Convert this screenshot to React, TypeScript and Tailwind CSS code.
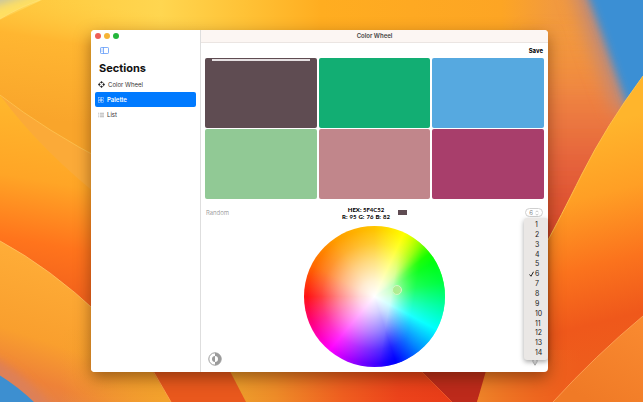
import { useState } from "react";
import { clsx } from "clsx";

const SWATCHES = [
  "#5f4c52", "#12ae73", "#56a9e0", "#91c995", "#c1868b", "#a83e6b", "#e0a458",
  "#3d5a80", "#98c1d9", "#ee6c4d", "#6a994e", "#bc4749", "#f2e8cf", "#386641",
];

const COUNTS = Array.from({ length: 14 }, (_, i) => i + 1);

function toRgb(hex: string) {
  const n = parseInt(hex.slice(1), 16);
  return { r: (n >> 16) & 255, g: (n >> 8) & 255, b: n & 255 };
}

function Wallpaper() {
  return (
    <svg
      viewBox="0 0 643 402"
      preserveAspectRatio="xMidYMid slice"
      className="absolute inset-0 w-full h-full"
      aria-hidden="true"
    >
      <defs>
        <linearGradient id="sky" x1="0" y1="0" x2="643" y2="0" gradientUnits="userSpaceOnUse">
          <stop offset="0" stopColor="#ffc63c" />
          <stop offset="0.12" stopColor="#ffce44" />
          <stop offset="0.25" stopColor="#ffd650" />
          <stop offset="0.38" stopColor="#ffc236" />
          <stop offset="0.5" stopColor="#ffad20" />
          <stop offset="0.78" stopColor="#fda524" />
          <stop offset="0.86" stopColor="#f29a3e" />
          <stop offset="1" stopColor="#ee8c44" />
        </linearGradient>
        <linearGradient id="leftTop" x1="70" y1="0" x2="50" y2="120" gradientUnits="userSpaceOnUse">
          <stop offset="0" stopColor="#ffca40" stopOpacity="0" />
          <stop offset="0.35" stopColor="#ffb631" />
          <stop offset="1" stopColor="#f9a52b" />
        </linearGradient>
        <linearGradient id="leftMid" x1="50" y1="110" x2="20" y2="285" gradientUnits="userSpaceOnUse">
          <stop offset="0" stopColor="#ffb62c" />
          <stop offset="0.4" stopColor="#ffa526" />
          <stop offset="0.75" stopColor="#ff741c" />
          <stop offset="1" stopColor="#f4641c" />
        </linearGradient>
        <linearGradient id="leftLow" x1="50" y1="250" x2="0" y2="402" gradientUnits="userSpaceOnUse">
          <stop offset="0" stopColor="#ffae38" />
          <stop offset="0.55" stopColor="#f99f2e" />
          <stop offset="0.8" stopColor="#ee8238" />
          <stop offset="1" stopColor="#e08050" />
        </linearGradient>
        <linearGradient id="lowGold" x1="60" y1="0" x2="165" y2="0" gradientUnits="userSpaceOnUse">
          <stop offset="0" stopColor="#f0a02c" stopOpacity="0" />
          <stop offset="1" stopColor="#f3a22c" />
        </linearGradient>
        <linearGradient id="lowMid" x1="230" y1="0" x2="455" y2="0" gradientUnits="userSpaceOnUse">
          <stop offset="0" stopColor="#eda02c" />
          <stop offset="0.2" stopColor="#ee8c28" />
          <stop offset="0.5" stopColor="#ef5e20" />
          <stop offset="0.75" stopColor="#ec431b" />
          <stop offset="1" stopColor="#e83c18" />
        </linearGradient>
        <linearGradient id="redGlow" x1="0" y1="20" x2="0" y2="250" gradientUnits="userSpaceOnUse">
          <stop offset="0" stopColor="#f5983a" stopOpacity="0" />
          <stop offset="0.35" stopColor="#ee8142" />
          <stop offset="0.65" stopColor="#e4603a" />
          <stop offset="1" stopColor="#d94428" />
        </linearGradient>
        <linearGradient id="petal" x1="575" y1="130" x2="630" y2="350" gradientUnits="userSpaceOnUse">
          <stop offset="0" stopColor="#ffb52c" />
          <stop offset="0.3" stopColor="#ff9f25" />
          <stop offset="0.6" stopColor="#fb731d" />
          <stop offset="0.85" stopColor="#ef581b" />
          <stop offset="1" stopColor="#ee5c1c" />
        </linearGradient>
        <linearGradient id="petalLow" x1="480" y1="0" x2="580" y2="0" gradientUnits="userSpaceOnUse">
          <stop offset="0" stopColor="#ee8228" />
          <stop offset="1" stopColor="#ee6a20" stopOpacity="0" />
        </linearGradient>
        <linearGradient id="corner" x1="640" y1="320" x2="590" y2="402" gradientUnits="userSpaceOnUse">
          <stop offset="0" stopColor="#f98a30" />
          <stop offset="1" stopColor="#f07a26" />
        </linearGradient>
        <filter id="soft" x="-50%" y="-50%" width="200%" height="200%">
          <feGaussianBlur stdDeviation="9" />
        </filter>
        <filter id="softer" x="-50%" y="-50%" width="200%" height="200%">
          <feGaussianBlur stdDeviation="4" />
        </filter>
      </defs>

      <rect width="643" height="402" fill="url(#sky)" />
      <path d="M0 0H42L0 20Z" fill="#ffdf62" />
      <path d="M-8 -8H38L-8 7Z" fill="#c4c4a4" filter="url(#softer)" />
      <path d="M0 19Q22 6 40 0H150L250 40V402H0Z" fill="url(#leftTop)" />
      <path d="M0 19Q22 6 40 0" fill="none" stroke="#ffe27e" strokeWidth="0.6" />

      {/* left petals */}
      <path d="M0 95Q45 130 110 164V330H0Z" fill="#fbaa38" />
      <path d="M0 95Q40 150 110 205V330H0Z" fill="url(#leftMid)" />
      <path d="M0 95Q45 130 110 164" fill="none" stroke="#ffcf60" strokeWidth="0.6" />
      <path d="M0 241Q50 268 100 315L180 402H0Z" fill="url(#leftLow)" />
      <path d="M60 330H140L170 402H60Z" fill="url(#lowGold)" />
      <path d="M0 241Q50 268 100 315" fill="none" stroke="#ffc364" strokeWidth="0.8" />
      <path d="M-20 352Q20 366 56 412H-20Z" fill="#dd8058" filter="url(#softer)" />
      <path d="M-4 373Q18 386 36 404H-4Z" fill="#3d8fd0" />

      {/* strip under the window */}
      <path d="M140 350L171 402H260L225 350Z" fill="#e9581d" />
      <path d="M219 350L246 402H460L424 350Z" fill="url(#lowMid)" />
      <path d="M400 350L452 402H500V350Z" fill="#bd2a1b" />
      <path d="M400 350L452 402" fill="none" stroke="#f4602c" strokeWidth="0.8" />
      <path d="M141 350L171 402" fill="none" stroke="#ffb350" strokeWidth="0.8" />

      {/* right side */}
      <path d="M520 20H590L643 110V260H530V250Z" fill="url(#redGlow)" filter="url(#softer)" />
      <path d="M570 -20L588 36L616 112H670V-20Z" fill="#c08a78" filter="url(#soft)" />
      <path d="M582 -20L602 34L628 108H670V-20Z" fill="#3a8fd4" filter="url(#softer)" />
      <path d="M643 76Q606 126 582 174T548 240Q508 310 477 402H643Z" fill="url(#petal)" />
      <path d="M492 350L477 402H580V350Z" fill="url(#petalLow)" />
      <path d="M643 76Q606 126 582 174T548 240" fill="none" stroke="#ffc04a" strokeWidth="1" />
      <path d="M553 402Q595 356 643 316V402Z" fill="url(#corner)" />
      <path d="M553 402Q595 356 643 316" fill="none" stroke="#ffa75c" strokeWidth="0.8" />
    </svg>
  );
}

function SidebarIcon() {
  return (
    <svg viewBox="0 0 18 14" className="w-[9px] h-[7px]" fill="none" stroke="#4b8df8" strokeWidth="1.4">
      <rect x="1" y="1" width="16" height="12" rx="1.6" />
      <path d="M7 1V13" />
      <path d="M3 4H5M3 6.5H5M3 9H5" strokeWidth="1" />
    </svg>
  );
}

function DiamondsIcon() {
  return (
    <svg viewBox="0 0 14 14" className="w-[7px] h-[7px]" fill="#222">
      <path d="M7 0L9.8 2.8L7 5.2L4.2 2.8Z" />
      <path d="M7 8.8L9.8 11.2L7 14L4.2 11.2Z" />
      <path d="M2.8 4.2L5.2 7L2.8 9.8L0 7Z" />
      <path d="M11.2 4.2L14 7L11.2 9.8L8.8 7Z" />
      <path d="M2.8 4.2L4.2 2.8M9.8 2.8L11.2 4.2M11.2 9.8L9.8 11.2M4.2 11.2L2.8 9.8" stroke="#222" strokeWidth="1.2" />
    </svg>
  );
}

function GridIcon() {
  return (
    <svg viewBox="0 0 12 12" className="w-[6px] h-[6px]" fill="none" stroke="#b9d8ff" strokeWidth="1">
      <rect x="0.8" y="0.8" width="4.4" height="4.4" />
      <rect x="6.8" y="0.8" width="4.4" height="4.4" />
      <rect x="0.8" y="6.8" width="4.4" height="4.4" />
      <rect x="6.8" y="6.8" width="4.4" height="4.4" />
      <circle cx="6" cy="6" r="1.5" fill="#b9d8ff" />
    </svg>
  );
}

function ListIcon() {
  return (
    <svg viewBox="0 0 12 12" className="w-[6px] h-[6px]" fill="none" stroke="#777" strokeWidth="1.1">
      <path d="M0.5 2.5H2M0.5 6H2M0.5 9.5H2M3.5 2.5H12M3.5 6H12M3.5 9.5H12" />
    </svg>
  );
}

function ContrastIcon() {
  return (
    <svg viewBox="0 0 28 28" className="w-[14px] h-[14px]">
      <circle cx="14" cy="14" r="12.4" fill="#fff" stroke="#9b9b9b" strokeWidth="2" />
      <path d="M14 1.6A12.4 12.4 0 0 1 14 26.4V20A6 6 0 0 0 14 8Z" fill="#9b9b9b" />
      <path d="M14 8A6 6 0 0 0 14 20Z" fill="#9b9b9b" />
    </svg>
  );
}

const SECTIONS = [
  { label: "Color Wheel", Icon: DiamondsIcon },
  { label: "Palette", Icon: GridIcon },
  { label: "List", Icon: ListIcon },
];

function Sidebar() {
  const [active, setActive] = useState("Palette");

  return (
    <aside className="w-[110px] shrink-0 bg-white border-r border-[#dedede] px-1">
      <div className="flex items-center gap-[3px] h-3">
        <button aria-label="Close" className="w-[6px] h-[6px] rounded-full bg-[#ee5f57]" />
        <button aria-label="Minimize" className="w-[6px] h-[6px] rounded-full bg-[#f6b436]" />
        <button aria-label="Zoom" className="w-[6px] h-[6px] rounded-full bg-[#23b63c]" />
      </div>
      <button aria-label="Toggle sidebar" className="block mt-[5px] ml-[5px]">
        <SidebarIcon />
      </button>
      <h1 className="mt-[6px] ml-1 text-[11px] leading-4 font-bold text-[#111]">Sections</h1>
      <nav className="mt-px">
        {SECTIONS.map(({ label, Icon }) => (
          <button
            key={label}
            onClick={() => setActive(label)}
            className={clsx(
              "flex items-center gap-[3px] w-full h-[15px] px-[3px] rounded-[2px] text-[6px] leading-[8px]",
              active === label ? "bg-[#007aff] text-white font-semibold" : "text-[#333]"
            )}
          >
            <Icon />
            {label}
          </button>
        ))}
      </nav>
    </aside>
  );
}

function Wheel() {
  return (
    <div className="relative w-[141px] h-[141px] rounded-full overflow-hidden bg-[radial-gradient(circle_closest-side,#fff_0%,rgba(255,255,255,0.82)_22%,rgba(255,255,255,0.5)_50%,rgba(255,255,255,0.18)_75%,transparent_95%),conic-gradient(#ffc400_0deg,#ffff00_25deg,#a8ff00_42deg,#00ff00_60deg,#00ff10_78deg,#00ff98_98deg,#00ffff_118deg,#0088ff_140deg,#0000ff_162deg,#7000ff_190deg,#ff00ff_220deg,#ff0080_247deg,#ff1414_270deg,#ff6a00_297deg,#ff9c00_325deg,#ffc400_360deg)]">
      {/* the cool side saturates sooner than the warm one */}
      <div className="absolute inset-0 bg-[conic-gradient(#ffff00_0deg,#ffff00_28deg,#00ff00_52deg,#00ff50_76deg,#00ffa0_96deg,#00ffff_118deg,#0088ff_140deg,#0000ff_162deg)] opacity-70 [mask-image:linear-gradient(100deg,transparent_60%,black_74%)]" />
      <div className="absolute left-[88px] top-[59px] w-[10px] h-[10px] rounded-full border border-[#d2f7c4] bg-[#aeed92]" />
    </div>
  );
}

export default function App() {
  const [count, setCount] = useState(6);
  const [menuOpen, setMenuOpen] = useState(true);
  const [selected, setSelected] = useState(0);
  const [colors, setColors] = useState(SWATCHES);

  const current = colors[selected];
  const { r, g, b } = toRgb(current);

  const randomize = () => {
    setColors(colors.map(() => "#" + Math.floor(Math.random() * 0xffffff).toString(16).padStart(6, "0")));
  };

  return (
    <div className="relative min-h-screen pt-[30px] pb-[30px] pl-[91px] pr-[95px] font-['Inter',sans-serif] text-[#222]">
      <Wallpaper />
      <div className="relative flex rounded-[4px] bg-white shadow-[0_6px_16px_rgba(70,30,0,0.5)]">
        <div className="flex flex-1 rounded-[4px] overflow-hidden">
          <Sidebar />
          <main className="flex-1 min-w-0">
            <header className="h-[13px] flex items-center justify-center bg-[#fcf6f3] border-b border-[#ebe5e2] text-[6px] leading-[8px] font-semibold text-[#444]">
              Color Wheel
            </header>
            <div className="h-[15px] flex items-center justify-end pr-[5px]">
              <button className="text-[6px] leading-[8px] font-bold text-black">Save</button>
            </div>

            <div className="grid grid-cols-3 auto-rows-[70px] gap-x-[2px] gap-y-px px-1">
              {colors.slice(0, count).map((c, i) => (
                <button
                  key={i}
                  aria-label={`Color ${i + 1}`}
                  onClick={() => setSelected(i)}
                  className="flex items-start px-[7px] pt-px rounded-[2px]"
                  style={{ backgroundColor: c }}
                >
                  {selected === i && <span className="w-full h-[2px] bg-[#e6e0e2]" />}
                </button>
              ))}
            </div>

            <div className="grid grid-cols-[1fr_auto_1fr] items-center h-[27px] px-[5px]">
              <button onClick={randomize} className="justify-self-start text-[6px] leading-[8px] font-light text-[#888]">
                Random
              </button>
              <div className="flex items-center gap-2">
                <div className="font-['Lato',sans-serif] text-[6px] leading-[7px] text-center text-black font-bold">
                  <div><span className="font-black">HEX:</span> {current.slice(1).toUpperCase()}</div>
                  <div className="flex gap-[2px]">
                    <span className="font-black">R:</span> {r}
                    <span className="font-black">G:</span> {g}
                    <span className="font-black">B:</span> {b}
                  </div>
                </div>
                <span className="w-[9px] h-[5px]" style={{ backgroundColor: current }} />
              </div>
              <button
                aria-haspopup="listbox"
                aria-expanded={menuOpen}
                onClick={() => setMenuOpen(!menuOpen)}
                className="justify-self-end flex items-center justify-center gap-[2px] w-[18px] h-[9px] rounded-full border border-[#d0d0d0] text-[6px] leading-[7px] text-[#888]"
              >
                {count}
                <svg viewBox="0 0 8 12" className="w-1 h-[6px]" fill="none" stroke="#aaa" strokeWidth="1.3">
                  <path d="M1.2 4.5L4 1.6L6.8 4.5M1.2 7.5L4 10.4L6.8 7.5" />
                </svg>
              </button>
            </div>

            <div className="grid grid-cols-[1fr_auto_1fr] items-end pl-[7px] pr-[10px] pb-[5px]">
              <button aria-label="Contrast" className="justify-self-start pb-px">
                <ContrastIcon />
              </button>
              <div className="pl-[3px]">
                <Wheel />
              </div>
              <button aria-label="Pick color" className="justify-self-end pb-px">
                <svg viewBox="0 0 12 14" className="w-[6px] h-[7px]" fill="none" stroke="#999" strokeWidth="1.4">
                  <path d="M2 1V6L6 12.5L10 6V1M6 5V12" />
                </svg>
              </button>
            </div>
          </main>
        </div>

        {menuOpen && (
          <ul
            role="listbox"
            aria-label="Number of colors"
            className="absolute right-0 top-[188px] w-[24px] h-[142px] py-[2px] flex flex-col rounded-[3px] bg-[#eae7e5] shadow-[0_2px_5px_rgba(0,0,0,0.35)]"
          >
            {COUNTS.map((n) => (
              <li key={n} role="option" aria-selected={n === count} className="flex-1 flex">
                <button
                  onClick={() => {
                    setCount(n);
                    setMenuOpen(false);
                  }}
                  className="flex items-center w-full pl-[5px] gap-px text-[7px] leading-[8px] text-[#222]"
                >
                  <span className="w-[5px]">
                    {n === count && (
                      <svg viewBox="0 0 10 12" className="w-[5px] h-[6px]" fill="none" stroke="#222" strokeWidth="2">
                        <path d="M1 7L4 10.5L9 1.5" />
                      </svg>
                    )}
                  </span>
                  {n}
                </button>
              </li>
            ))}
          </ul>
        )}
      </div>
    </div>
  );
}
